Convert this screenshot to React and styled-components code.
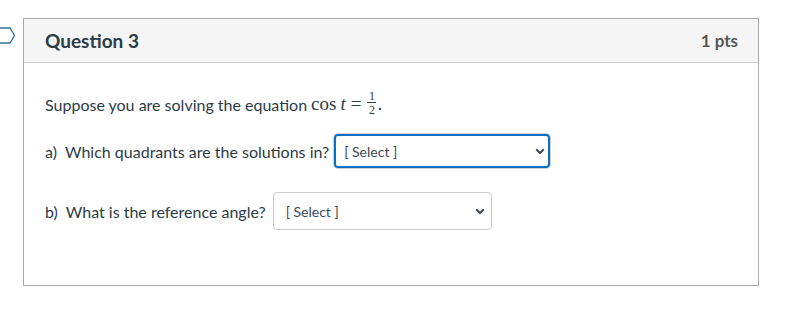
import React from 'react';
import styled, { createGlobalStyle } from 'styled-components';

const GlobalStyle = createGlobalStyle`
  body {
    margin: 0;
    background: #ffffff;
    font-family: Lato, "Liberation Sans", sans-serif;
    color: #2d3b45;
  }
`;

const Page = styled.div`
  display: flex;
  align-items: flex-start;
  height: 310px;
  padding-top: 18px;
  box-sizing: border-box;
`;

const FlagColumn = styled.div`
  flex: 0 0 23px;
  padding-top: 9px;
`;

const Card = styled.div`
  flex: 0 0 736px;
  height: 268px;
  box-sizing: border-box;
  border: 1px solid #a8a8a8;
  display: flex;
  flex-direction: column;
`;

const Header = styled.div`
  height: 43px;
  flex: 0 0 43px;
  background: #f5f5f5;
  border-bottom: 1px solid #c7cdd1;
  display: flex;
  align-items: center;
  justify-content: space-between;
  padding: 0 20px 0 21px;
`;

const Title = styled.div`
  font-size: 19px;
  font-weight: 700;
  color: #2d3b45;
`;

const Points = styled.div`
  font-size: 17px;
  font-weight: 700;
  color: #565656;
`;

const Body = styled.div`
  padding: 26px 21px 0;
  display: flex;
  flex-direction: column;
`;

const Line = styled.div`
  font-size: ${(p) => p.fs || 16}px;
  display: flex;
  align-items: center;
  height: ${(p) => p.h}px;
  margin-bottom: ${(p) => p.mb || 0}px;
  white-space: pre;
`;

const Math = styled.span`
  font-family: "Liberation Serif", "DejaVu Serif", serif;
  font-size: 19px;
  margin-left: 4px;
  display: inline-flex;
  align-items: center;
  color: #2d3b45;
`;

const Ital = styled.i`
  margin: 0 5px 0 4px;
`;

const Frac = styled.span`
  display: inline-flex;
  flex-direction: column;
  align-items: center;
  font-size: 12px;
  line-height: 10px;
  margin: 0 1px 0 6px;
  position: relative;
  top: -1px;
`;

const FracBar = styled.span`
  width: 9px;
  border-top: 1px solid #2d3b45;
  margin: 1px 0 2px;
`;

const SelectBox = styled.div`
  margin-left: ${(p) => p.ml}px;
  width: ${(p) => p.w}px;
  height: ${(p) => p.h}px;
  box-sizing: border-box;
  border-radius: 4px;
  border: ${(p) => (p.focused ? '2px solid #0770c9' : '1px solid #c7cdd1')};
  box-shadow: ${(p) => (p.focused ? '0 0 0 1px #cfcfcf' : 'none')};
  display: flex;
  align-items: center;
  justify-content: space-between;
  padding: 0 ${(p) => (p.focused ? 3 : 6)}px 0 ${(p) => (p.focused ? 8 : 12)}px;
  font-size: 14px;
  color: #3b4a54;
`;

const Chevron = () => (
  <svg width="10" height="7" viewBox="0 0 10 7">
    <path d="M1.2 1.3 L5 5 L8.8 1.3" fill="none" stroke="#2d3b45" strokeWidth="1.8" />
  </svg>
);

const Flag = () => (
  <svg width="16" height="17" viewBox="0 0 16 17">
    <path d="M-2 1 H10 L14.5 8.5 L10 16 H-2" fill="none" stroke="#2f6d9c" strokeWidth="1.3" />
  </svg>
);

export default function App() {
  return (
    <>
      <GlobalStyle />
      <Page>
        <FlagColumn>
          <Flag />
        </FlagColumn>
        <Card>
          <Header>
            <Title>Question 3</Title>
            <Points>1 pts</Points>
          </Header>
          <Body>
            <Line h={30} mb={15}>
              Suppose you are solving the equation
              <Math>
                cos<Ital>t</Ital>=
                <Frac>
                  <span>1</span>
                  <FracBar />
                  <span>2</span>
                </Frac>
                .
              </Math>
            </Line>
            <Line h={34} mb={24}>
              {'a)  Which quadrants are the solutions in?'}
              <SelectBox focused ml={5} w={216} h={34}>
                <span>[ Select ]</span>
                <Chevron />
              </SelectBox>
            </Line>
            <Line h={38}>
              {'b)  What is the reference angle?'}
              <SelectBox ml={7} w={219} h={38}>
                <span>[ Select ]</span>
                <Chevron />
              </SelectBox>
            </Line>
          </Body>
        </Card>
      </Page>
    </>
  );
}
